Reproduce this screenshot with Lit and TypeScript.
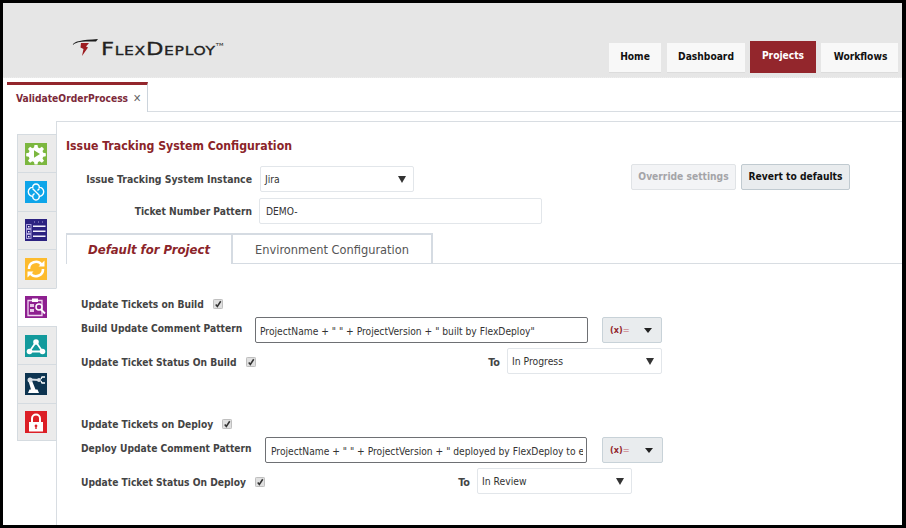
import { LitElement, html, css, svg } from "lit";
import { customElement } from "lit/decorators.js";

const ICONS = [
  {
    bg: "#7cb73f",
    art: svg`<path fill="#fff" fill-rule="evenodd" d="M9.500 2h3l.5 2.600 1.700.7 2.200-1.500 2.100 2.100-1.500 2.200.7 1.700 2.600.5v3l-2.600.5-.7 1.700 1.500 2.200-2.100 2.100-2.200-1.500-1.700.7-.5 2.600h-3l-.5-2.600-1.700-.7-2.200 1.500-2.100-2.100 1.500-2.200-.7-1.700-2.600-.5v-3l2.600-.5.7-1.700-1.500-2.200 2.100-2.100 2.200 1.500 1.700-.7zM9 7.200v7.600l6-3.800z"/>`,
  },
  {
    bg: "#0ea5e9",
    art: svg`<path fill="none" stroke="#fff" stroke-width="1.400" d="M11 3c2 0 3.400 1.500 3.300 3.400 2.200-.3 4.400 1.900 4.400 4.400s-2.200 4.800-4.400 4.400c.1 2-1.300 3.800-3.300 3.800s-3.400-1.800-3.300-3.800c-2.200.4-4.400-1.900-4.400-4.400s2.200-4.700 4.400-4.400C7.600 4.500 9 3 11 3z"/><path fill="none" stroke="#fff" stroke-width="1.400" d="M7.500 7.500l7 7M14.500 7.500l-2 2M7.500 14.500l2-2"/>`,
  },
  {
    bg: "#2c2281",
    art: svg`<g fill="none" stroke="#a9a0dc" stroke-width="1"><rect x="1.500" y="5.500" width="4.500" height="4"/><rect x="1.500" y="10.500" width="4.500" height="4"/><rect x="1.500" y="15.500" width="4.500" height="4"/></g><g fill="#a9a0dc"><rect x="9" y="2.500" width="1" height="1"/><rect x="13" y="2.500" width="1" height="1"/><rect x="17" y="2.500" width="1" height="1"/></g><g fill="#f2f0fb"><rect x="8" y="6.500" width="12.500" height="1.500"/><rect x="8" y="11.500" width="12.500" height="1.500"/><rect x="8" y="16.500" width="12.500" height="1.500"/><rect x="3" y="7" width="1.500" height="1.500"/><rect x="3" y="12" width="1.500" height="1.500"/><rect x="3" y="17" width="1.500" height="1.500"/></g>`,
  },
  {
    bg: "#fdbb2d",
    art: svg`<g fill="none" stroke="#fff" stroke-width="2.600"><path d="M4 11A7 7 0 0 1 16.500 6.500"/><path d="M18 11A7 7 0 0 1 5.500 15.500"/></g><path fill="#fff" d="M13.500 8.500h6v-6zM8.500 13.500h-6v6z"/>`,
  },
  {
    bg: "#8e2090",
    art: svg`<path fill="none" stroke="#f0d6f0" stroke-width="1.300" d="M3 4.500h14v15h-14z"/><rect x="7" y="2.500" width="6" height="3.500" fill="#fff"/><g fill="#e8c8e8"><rect x="5" y="8" width="4" height="3"/><rect x="5" y="13" width="4" height="3"/></g><circle cx="14" cy="11" r="3" fill="#8e2090" stroke="#fff" stroke-width="1.500"/><path stroke="#fff" stroke-width="1.800" d="M16 13.500l4 4"/>`,
  },
  {
    bg: "#139a9c",
    art: svg`<path fill="none" stroke="#fff" stroke-width="1.800" d="M11 7l-6.500 9.500h13z"/><circle cx="11" cy="7" r="2.800" fill="#fff"/><circle cx="4.500" cy="16.500" r="2.800" fill="#fff"/><circle cx="17.500" cy="16.500" r="2.800" fill="#fff"/>`,
  },
  {
    bg: "#0d3450",
    art: svg`<path fill="#fff" d="M3 20l1.500-3.500h8l1.500 3.500zM6 16.500l-2.500-8.500 3-1.500 4 10z"/><path stroke="#d8dfe5" stroke-width="2.200" d="M5 6.500l9 .5"/><circle cx="5" cy="7" r="2.500" fill="#d8dfe5"/><circle cx="14" cy="7" r="2" fill="#d8dfe5"/><path fill="none" stroke="#fff" stroke-width="1.300" d="M20 4h-3l-1 2M20 10h-3l-1-2"/>`,
  },
  {
    bg: "#dc1f26",
    art: svg`<path fill="none" stroke="#fff" stroke-width="2" d="M7 11V7.500a4 4 0 0 1 8 0V11"/><path fill="#fff" fill-rule="evenodd" d="M4 11h14v9.500h-14zM11 13.500a1.400 1.400 0 0 0-.7 2.600v2h1.400v-2A1.400 1.400 0 0 0 11 13.500z"/>`,
  },
];

@customElement("app-root")
export class AppRoot extends LitElement {
  static styles = css`
    :host {
      display: block;
      width: 906px;
      height: 528px;
      overflow: hidden;
      font-family: "DejaVu Sans", Verdana, sans-serif;
      font-stretch: condensed;
      font-size: 10.200px;
      color: #333;
    }
    .frame {
      box-sizing: border-box;
      width: 906px;
      height: 528px;
      border: solid #000;
      border-width: 3px 4px 3px 3px;
      background: #fff;
      overflow: hidden;
    }
    .header {
      height: 74px;
      background: #e6e6e6;
      border-bottom: 1px dotted #eee;
      display: flex;
      justify-content: space-between;
    }
    .logo {
      display: flex;
      align-items: center;
      gap: 3px;
      margin: 34px 0 0 69px;
      height: 20px;
    }
    .logo-text {
      font-family: "DejaVu Sans", Verdana, sans-serif;
      font-stretch: normal;
      font-size: 17.500px;
      font-variant: small-caps;
      letter-spacing: 0.5px;
      color: #222;
      line-height: 20px;
      -webkit-text-stroke: 0.3px #222;
      transform: scaleX(1.3);
      transform-origin: left center;
    }
    .logo-text sup {
      font-size: 4px;
      vertical-align: 9px;
      letter-spacing: 0;
      -webkit-text-stroke: 0;
    }
    .nav {
      display: flex;
      align-items: flex-end;
      gap: 5px;
      padding: 0 4px 4px 0;
    }
    .nav a {
      box-sizing: border-box;
      height: 30px;
      padding-bottom: 2px;
      background: #f8f8f8;
      border-bottom: 1px solid #dcdcdc;
      display: flex;
      align-items: center;
      justify-content: center;
      font-weight: 700;
      color: #111;
    }
    .nav a.home { width: 52px; margin-right: 1px; }
    .nav a.dash { width: 78px; }
    .nav a.proj {
      width: 66px;
      height: 32px;
      padding-bottom: 3px;
      background: #93262c;
      color: #fff;
      border-bottom: 0;
    }
    .nav a.work { width: 77px; padding-left: 2px; }
    .tabstrip {
      height: 34px;
      box-sizing: border-box;
      padding: 4px 0 0 4px;
      display: flex;
    }
    .doc-tab {
      box-sizing: border-box;
      width: 141px;
      height: 30px;
      border-top: 3px solid #93262c;
      border-right: 1px solid #ccd4dc;
      display: flex;
      align-items: center;
      padding-left: 9px;
      gap: 5px;
      font-weight: 700;
      color: #7c2a3a;
    }
    .doc-tab .close {
      color: #666;
      font-size: 11px;
      line-height: 1;
    }
    .strip-line {
      flex: 1;
      border-bottom: 1px solid #d8dde2;
    }
    .body {
      display: flex;
      height: 414px;
      padding: 9px 0 0 14px;
      box-sizing: border-box;
    }
    .side {
      box-sizing: border-box;
      width: 40px;
      margin-top: 13px;
      align-self: flex-start;
      display: flex;
      flex-direction: column;
      position: relative;
      z-index: 1;
    }
    .side-item {
      height: 38.400px;
      box-sizing: border-box;
      background: #ebebeb;
      border: solid #d5dbe0;
      border-width: 1px 1px 0 1px;
      display: flex;
      align-items: center;
      justify-content: center;
      padding-right: 2px;
    }
    .side-item:last-child { border-bottom: 1px solid #d5dbe0; }
    .side-item.current {
      background: #fff;
      border-right-color: #fff;
    }
    .side-item svg { display: block; }
    .main {
      flex: 1;
      margin-left: -1px;
      border-left: 1px solid #d8dde2;
      border-top: 1px solid #d8dde2;
      padding: 16px 0 0 9px;
      min-width: 0;
    }
    h2 {
      margin: 0;
      font-size: 12.200px;
      font-weight: 700;
      line-height: 16px;
      color: #8b2429;
    }
    .top {
      display: flex;
      align-items: flex-start;
    }
    .top-form {
      width: 565px;
    }
    .row {
      display: flex;
      align-items: center;
    }
    .top-form .row.instance { margin-top: 12px; height: 26px; }
    .top-form .row.ticket { margin-top: 6px; height: 26px; }
    .label {
      font-weight: 700;
      color: #444;
      white-space: nowrap;
    }
    .top-form .label {
      width: 186px;
      text-align: right;
    }
    .top-form .instance .label { font-size: 10.400px; }
    .select {
      box-sizing: border-box;
      height: 26px;
      border: 1px solid #e2e6ea;
      display: flex;
      align-items: center;
      justify-content: space-between;
      padding: 0 7px 0 4px;
      color: #333;
      font-size: 10.300px;
      background: #fff;
      border-radius: 2px;
    }
    .arrow {
      width: 0;
      height: 0;
      border-left: 4.500px solid transparent;
      border-right: 4.500px solid transparent;
      border-top: 7px solid #333;
    }
    .instance .select { width: 154px; margin-left: 8px; }
    .text {
      box-sizing: border-box;
      height: 26px;
      padding: 0 5px;
      border: 1px solid #e2e6ea;
      font: inherit;
      font-size: 10.200px;
      color: #333;
      outline: none;
      background: #fff;
      border-radius: 2px;
    }
    .ticket .text { width: 283px; margin-left: 7px; padding-left: 6px; }
    .actions {
      display: flex;
      gap: 5px;
      margin-top: 26px;
    }
    .btn {
      box-sizing: border-box;
      height: 26px;
      display: flex;
      align-items: center;
      justify-content: center;
      font-weight: 700;
      padding-bottom: 2px;
      border-radius: 2px;
    }
    .btn.off {
      width: 105px;
      background: #f3f4f6;
      border: 1px solid #e0e3e6;
      color: #a4a4a8;
    }
    .btn.on {
      width: 109px;
      background: #e9ecee;
      border: 1px solid #c0cad0;
      color: #111;
    }
    .tabs {
      display: flex;
      margin-top: 9px;
      height: 31px;
    }
    .tab {
      box-sizing: border-box;
      display: flex;
      align-items: center;
      justify-content: center;
      height: 31px;
      border: solid #d5dbe2;
      border-width: 2px 2px 0 0;
      font-size: 12.700px;
    }
    .tab.active {
      width: 167px;
      border-width: 2px 2px 0 1px;
      font-weight: 700;
      font-style: italic;
      font-size: 13px;
      color: #8b2429;
    }
    .tab.other {
      width: 200px;
      border-bottom: 1px solid #d5dbe2;
      color: #555;
    }
    .tab-line {
      flex: 1;
      border-bottom: 1px solid #d8dde2;
    }
    .group { padding-left: 15px; }
    .group.build { margin-top: 32px; }
    .group.deploy { margin-top: 42px; }
    .row.flag { height: 16px; gap: 9px; }
    .row.comment { height: 26px; margin-top: 5px; }
    .row.comment .label { padding-bottom: 4px; }
    .row.status { height: 26px; margin-top: 5px; }
    .row.status .label, .to { padding-top: 2px; }
    .check {
      width: 10px;
      height: 10px;
      display: block;
      flex: none;
    }
    .status-left .check { margin-top: 1px; }
    .pattern {
      border: 1px solid #6e7074;
      border-radius: 2px;
      padding-top: 2px;
    }
    .build .comment .label { width: 174px; }
    .deploy .comment .label { width: 184px; }
    .build .pattern { width: 333px; padding-left: 4px; }
    .deploy .pattern { width: 322px; padding-right: 3px; }
    .fx {
      box-sizing: border-box;
      width: 60px;
      height: 26px;
      background: #e9ecee;
      border: 1px solid #c8d2d8;
      border-radius: 2px;
      display: flex;
      align-items: center;
      justify-content: space-between;
      padding: 0 9px 0 7px;
      margin-left: 14px;
      color: #93262c;
      font-size: 9px;
      font-weight: 700;
    }
    .fx .eq { color: #d39aa0; }
    .deploy .fx { width: 61px; margin-left: 15px; }
    .fx .arrow {
      border-left-width: 4px;
      border-right-width: 4px;
      border-top-width: 5px;
      border-top-color: #222;
    }
    .status-left {
      display: flex;
      align-items: center;
      gap: 9px;
      margin-right: auto;
    }
    .to { font-weight: 700; color: #444; margin-right: 7px; font-size: 10.800px; }
    .status .select { width: 155px; }
    .build .status { width: 581px; }
    .deploy .status { width: 551px; }
  `;

  private checkbox() {
    return html`<svg class="check" viewBox="0 0 11 11">
      <rect x=".5" y=".5" width="10" height="10" rx="1" fill="#e0e0e0" stroke="#b8b8b8" />
      <path d="M3 6l1.800 2.200L8.500 2.500" fill="none" stroke="#333" stroke-width="1.700" />
    </svg>`;
  }

  private section(cls: string, kind: string, pattern: string, status: string) {
    return html`<div class="group ${cls}">
      <div class="row flag">
        <span class="label">Update Tickets on ${kind}</span>${this.checkbox()}
      </div>
      <div class="row comment">
        <span class="label">${kind} Update Comment Pattern</span>
        <input class="text pattern" .value=${pattern} readonly />
        <div class="fx"><span>(x)<span class="eq">=</span></span><span class="arrow"></span></div>
      </div>
      <div class="row status">
        <div class="status-left">
          <span class="label">Update Ticket Status On ${kind}</span>${this.checkbox()}
        </div>
        <span class="to">To</span>
        <div class="select">${status}<span class="arrow"></span></div>
      </div>
    </div>`;
  }

  render() {
    return html`<div class="frame">
      <div class="header">
        <div class="logo">
          <svg width="26" height="17" viewBox="0 0 26 17">
            <path fill="#1c1c1c" d="M0 6C3 2 9 1 26 0l-2 2.500H14C8 2.500 4 3.500 0 6z" />
            <path fill="#9c1c20" d="M9 4h8l-3 3.500 2 1-6 8.500 1.500-7-3-1.500z" />
          </svg>
          <span class="logo-text">FlexDeploy<sup>TM</sup></span>
        </div>
        <nav class="nav">
          <a class="home">Home</a>
          <a class="dash">Dashboard</a>
          <a class="proj">Projects</a>
          <a class="work">Workflows</a>
        </nav>
      </div>
      <div class="tabstrip">
        <div class="doc-tab">ValidateOrderProcess<span class="close">✕</span></div>
        <div class="strip-line"></div>
      </div>
      <div class="body">
        <div class="side">
          ${ICONS.map(
            (icon, i) => html`<div class="side-item ${i === 4 ? "current" : ""}">
              <svg width="22" height="22" viewBox="0 0 22 22">
                <rect width="22" height="22" fill=${icon.bg} />${icon.art}
              </svg>
            </div>`
          )}
        </div>
        <div class="main">
          <div class="top">
            <div class="top-form">
              <h2>Issue Tracking System Configuration</h2>
              <div class="row instance">
                <span class="label">Issue Tracking System Instance</span>
                <div class="select">Jira<span class="arrow"></span></div>
              </div>
              <div class="row ticket">
                <span class="label">Ticket Number Pattern</span>
                <input class="text" value="DEMO-" readonly />
              </div>
            </div>
            <div class="actions">
              <div class="btn off">Override settings</div>
              <div class="btn on">Revert to defaults</div>
            </div>
          </div>
          <div class="tabs">
            <div class="tab active">Default for Project</div>
            <div class="tab other">Environment Configuration</div>
            <div class="tab-line"></div>
          </div>
          ${this.section(
            "build",
            "Build",
            'ProjectName + " " + ProjectVersion + " built by FlexDeploy"',
            "In Progress"
          )}
          ${this.section(
            "deploy",
            "Deploy",
            'ProjectName + " " + ProjectVersion + " deployed by FlexDeploy to environment',
            "In Review"
          )}
        </div>
      </div>
    </div>`;
  }
}
